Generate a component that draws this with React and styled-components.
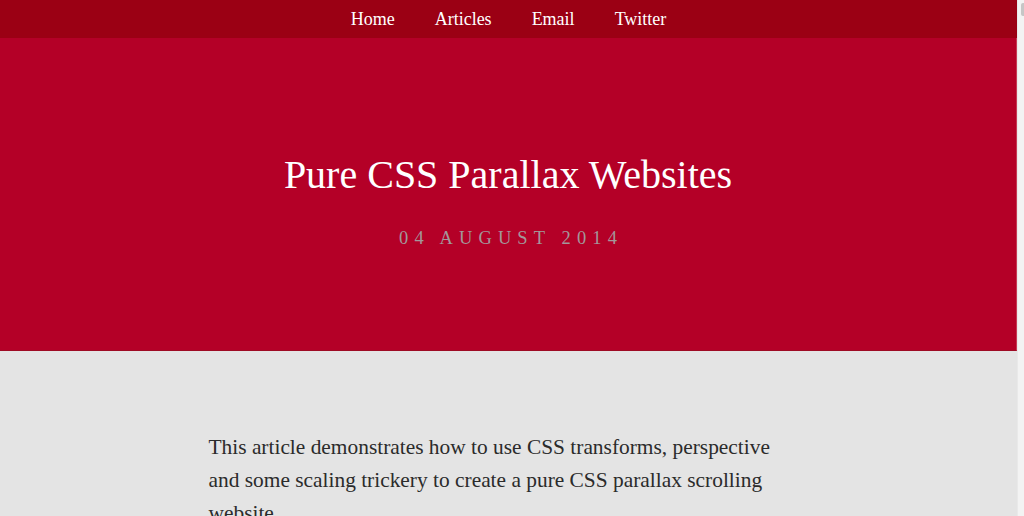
import React from "react";
import styled, { createGlobalStyle } from "styled-components";

const Global = createGlobalStyle`
  html, body { margin: 0; padding: 0; height: 100%; overflow: hidden; }
  body { font-family: "Liberation Serif", "DejaVu Serif", serif; background: #e4e4e4; }
  #root { height: 100%; }
`;

const Frame = styled.div`
  display: flex;
  height: 516px;
  width: 1024px;
  overflow: hidden;
`;

const Page = styled.div`
  flex: 1;
  display: flex;
  flex-direction: column;
  background: #e4e4e4;
  min-width: 0;
  overflow: hidden;
`;

const Track = styled.div`
  width: 6px;
  background: #f3f3f3;
  border-left: 1px solid #e9e9e9;
  display: flex;
  flex-direction: column;
  padding-top: 3px;
  align-items: flex-end;
`;

const Thumb = styled.div`
  width: 3px;
  height: 13px;
  background: #c6c6c6;
  border-radius: 2px 0 0 2px;
`;

const Nav = styled.nav`
  flex-shrink: 0;
  height: 38px;
  background: #9b0014;
  display: flex;
  justify-content: center;
  align-items: center;
  gap: 40px;
  padding-top: 1px;
  box-sizing: border-box;
`;

const NavLink = styled.a`
  color: #ffffff;
  font-size: 18px;
  text-decoration: none;
`;

const Hero = styled.header`
  flex-shrink: 0;
  height: 313px;
  background: #b40027;
  display: flex;
  flex-direction: column;
  align-items: center;
  box-sizing: border-box;
  padding-top: 112px;
  border-right: 1px solid #c73a55;
  border-bottom: 1px solid #9e0a24;
`;

const Title = styled.h1`
  margin: 0;
  color: #ffffff;
  font-weight: normal;
  font-size: 40px;
  line-height: 50px;
`;

const Date = styled.div`
  margin-top: 28px;
  color: #a3979a;
  font-size: 18.5px;
  letter-spacing: 0.33em;
  padding-left: 0.33em;
`;

const Content = styled.main`
  flex-shrink: 0;
  width: 600px;
  margin: 0 auto;
  padding-top: 80px;
`;

const Para = styled.p`
  margin: 0;
  max-width: 578px;
  color: #2b2b2b;
  font-size: 21.4px;
  line-height: 33px;
`;

export default function App() {
  return (
    <>
      <Global />
      <Frame>
        <Page>
          <Nav>
            <NavLink href="#">Home</NavLink>
            <NavLink href="#">Articles</NavLink>
            <NavLink href="#">Email</NavLink>
            <NavLink href="#">Twitter</NavLink>
          </Nav>
          <Hero>
            <Title>Pure CSS Parallax Websites</Title>
            <Date>04 AUGUST 2014</Date>
          </Hero>
          <Content>
            <Para>
              This article demonstrates how to use CSS transforms, perspective
              and some scaling trickery to create a pure CSS parallax scrolling
              website.
            </Para>
          </Content>
        </Page>
        <Track>
          <Thumb />
        </Track>
      </Frame>
    </>
  );
}
